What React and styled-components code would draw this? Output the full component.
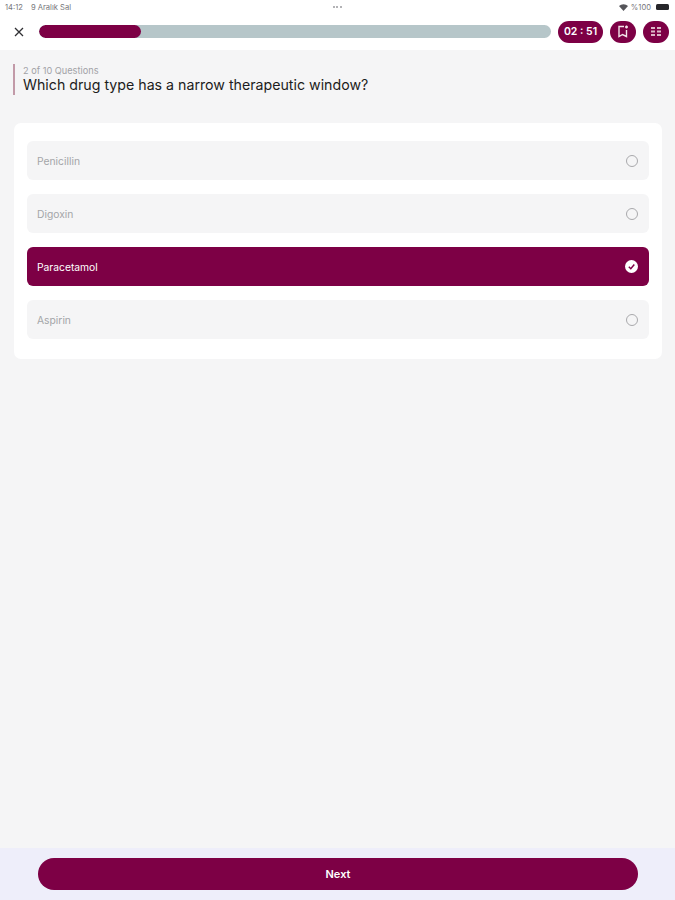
import React from 'react';
import styled, { createGlobalStyle } from 'styled-components';

const GlobalStyle = createGlobalStyle`
  html, body { margin: 0; padding: 0; height: 100%; }
  body { font-family: Inter, "Noto Sans", "Liberation Sans", sans-serif; background: #f5f5f6; }
  #root { height: 100%; }
`;

const Page = styled.div`
  width: 675px;
  height: 900px;
  display: flex;
  flex-direction: column;
  background: #f5f5f6;
  overflow: hidden;
`;

const Header = styled.header`
  height: 50px;
  background: #ffffff;
  display: flex;
  flex-direction: column;
`;

const StatusBar = styled.div`
  height: 13px;
  padding: 1px 6px 0 5px;
  box-sizing: border-box;
  display: grid;
  grid-template-columns: 1fr auto 1fr;
  align-items: center;
  font-size: 7.6px;
  color: #77777b;
`;

const StatusLeft = styled.div`
  display: flex;
  gap: 8px;
`;

const Dots = styled.div`
  display: flex;
  gap: 1.5px;
  span {
    width: 2px;
    height: 2px;
    border-radius: 50%;
    background: #9a9a9e;
  }
`;

const StatusRight = styled.div`
  display: flex;
  justify-content: flex-end;
  align-items: center;
  gap: 3px;
`;

const Battery = styled.div`
  width: 13px;
  height: 6px;
  margin-left: 2px;
  border-radius: 1.5px;
  background: #26262a;
`;

const Toolbar = styled.div`
  flex: 1;
  display: flex;
  align-items: center;
  padding: 0 6px 0 13px;
`;

const CloseButton = styled.div`
  width: 12px;
  height: 12px;
  margin-right: 14px;
  display: flex;
  color: #303034;
`;

const Track = styled.div`
  flex: 1;
  height: 13px;
  border-radius: 7px;
  background: #b6c6c9;
  overflow: hidden;
`;

const Fill = styled.div`
  height: 100%;
  border-radius: 7px;
  background: #7d0045;
`;

const Pill = styled.div`
  width: ${(p) => p.$w}px;
  height: 22px;
  margin-left: 7px;
  border-radius: 11px;
  background: #7d0045;
  color: #ffffff;
  display: flex;
  align-items: center;
  justify-content: center;
  font-size: 10.5px;
  font-weight: 600;
`;

const Content = styled.main`
  flex: 1;
  padding: 14px 13px 0 14px;
`;

const QuestionHead = styled.div`
  margin-left: -1px;
  height: 31px;
  padding-left: 8px;
  border-left: 2px solid #c29aa8;
  display: flex;
  flex-direction: column;
  justify-content: center;
`;

const Count = styled.div`
  font-size: 9.2px;
  line-height: 11px;
  color: #a2a2a6;
`;

const Question = styled.div`
  font-size: 14.2px;
  line-height: 18px;
  color: #1c1c20;
`;

const Card = styled.section`
  margin-top: 28px;
  padding: 18px 13px 20px;
  border-radius: 7px;
  background: #ffffff;
  display: flex;
  flex-direction: column;
  gap: 14px;
`;

const Option = styled.div`
  height: 39px;
  padding: 0 11px 0 10px;
  border-radius: 6px;
  display: flex;
  align-items: center;
  justify-content: space-between;
  font-size: 10.3px;
  background: ${(p) => (p.$selected ? '#7d0045' : '#f5f5f6')};
  color: ${(p) => (p.$selected ? '#ffffff' : '#a4a5a8')};
`;

const Radio = styled.div`
  width: 12px;
  height: 12px;
  box-sizing: border-box;
  border: 1.2px solid #a9a9ac;
  border-radius: 50%;
`;

const Footer = styled.footer`
  height: 52px;
  box-sizing: border-box;
  padding: 10px 37px 10px 38px;
  background: #eeeefa;
`;

const NextButton = styled.div`
  height: 32px;
  border-radius: 16px;
  background: #7d0045;
  color: #ffffff;
  display: flex;
  align-items: center;
  justify-content: center;
  font-size: 11px;
  font-weight: 600;
`;

const options = ['Penicillin', 'Digoxin', 'Paracetamol', 'Aspirin'];

const App = () => {
  return (
    <Page>
      <GlobalStyle />
      <Header>
        <StatusBar>
          <StatusLeft>
            <span>14:12</span>
            <span>9 Aralık Sal</span>
          </StatusLeft>
          <Dots><span /><span /><span /></Dots>
          <StatusRight>
            <svg width="9" height="7" viewBox="0 0 9 7">
              <path d="M0 2 A6.5 6.5 0 0 1 9 2 L4.5 7 Z" fill="#55555a" />
            </svg>
            <span>%100</span>
            <Battery />
          </StatusRight>
        </StatusBar>
        <Toolbar>
          <CloseButton>
            <svg width="12" height="12" viewBox="0 0 12 12" fill="none" stroke="currentColor" strokeWidth="1.3">
              <path d="M2 2 L10 10 M10 2 L2 10" />
            </svg>
          </CloseButton>
          <Track>
            <Fill style={{ width: `${(2 / 10) * 100}%` }} />
          </Track>
          <Pill $w={45}>02 : 51</Pill>
          <Pill $w={26}>
            <svg width="12" height="13" viewBox="0 0 12 13" fill="none" stroke="#f3e4ea" strokeWidth="1.4">
              <path d="M7 1.5 H2 V11.5 L5.5 9.5 L9.5 11.5 V5" />
              <path d="M9.5 0.5 V3.5 M8 2 H11" />
            </svg>
          </Pill>
          <Pill $w={26}>
            <svg width="10" height="9" viewBox="0 0 10 9" fill="#dcb9c8">
              <rect x="0" y="0" width="4" height="2" />
              <rect x="6" y="0" width="4" height="2" />
              <rect x="0" y="3.5" width="4" height="2" />
              <rect x="6" y="3.5" width="4" height="2" />
              <rect x="0" y="7" width="4" height="2" />
              <rect x="6" y="7" width="4" height="2" />
            </svg>
          </Pill>
        </Toolbar>
      </Header>
      <Content>
        <QuestionHead>
          <Count>2 of 10 Questions</Count>
          <Question>Which drug type has a narrow therapeutic window?</Question>
        </QuestionHead>
        <Card>
          {options.map((label) => {
            const selected = label === 'Paracetamol';
            return (
              <Option key={label} $selected={selected}>
                <span>{label}</span>
                {selected ? (
                  <svg width="13" height="13" viewBox="0 0 13 13">
                    <circle cx="6.5" cy="6.5" r="6.5" fill="#fff" />
                    <path d="M3.8 6.8 L5.8 8.7 L9.3 4.6" fill="none" stroke="#7d0045" strokeWidth="1.5" />
                  </svg>
                ) : (
                  <Radio />
                )}
              </Option>
            );
          })}
        </Card>
      </Content>
      <Footer>
        <NextButton>Next</NextButton>
      </Footer>
    </Page>
  );
};

export default App;
